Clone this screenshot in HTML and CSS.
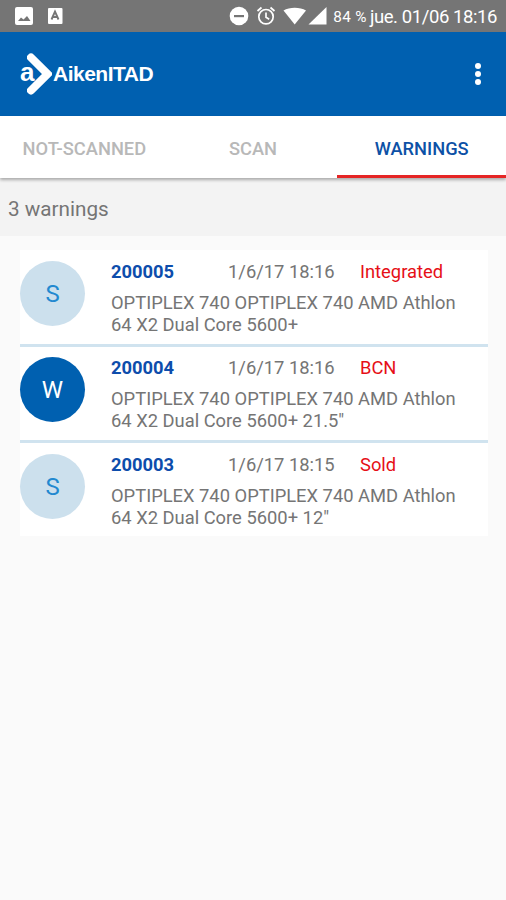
FILE: index.html
```html
<!DOCTYPE html>
<html lang="en">
<head>
  <meta charset="UTF-8">
  <meta name="viewport" content="width=device-width, initial-scale=1.0">
  <title>AikenITAD</title>
  <link rel="stylesheet" href="styles.css">
</head>
<body>
  <div class="status-bar">
    <svg class="status-left" width="50" height="18" viewBox="0 0 50 18">
      <rect x="0" y="0" width="18" height="18" rx="2" fill="#fff"/>
      <path d="M3 14l3-3.500 2.500 2 3.500-3.500 3.500 5z" fill="#757575"/>
      <rect x="33" y="1" width="14.500" height="16" rx="1" fill="#fff"/>
      <path d="M36.500 12.500l3.500-8 3.500 8M38 10h4" fill="none" stroke="#757575" stroke-width="1.900"/>
    </svg>
    <div class="status-right">
      <svg width="100" height="20" viewBox="0 0 100 20">
        <circle cx="10" cy="10" r="9.300" fill="#fff"/>
        <rect x="5" y="9" width="10" height="2.200" fill="#757575"/>
        <g fill="none" stroke="#fff" stroke-width="1.700">
          <circle cx="37" cy="10.700" r="7.200"/>
          <path d="M37 6.500v4.700l3.200 2M28.500 5l4-3.500M45.500 5l-4-3.500"/>
        </g>
        <path d="M54.500 4.500C60.500 .8 71 .8 77 4.500L65.700 18.500z" fill="#fff"/>
        <path d="M97.500 1v17.500H79.500z" fill="#fff"/>
      </svg>
      <span class="battery">84 %</span>
      <span class="clock">jue. 01/06 18:16</span>
    </div>
  </div>

  <header class="app-bar">
    <div class="logo">
      <span class="logo-a">a</span>
      <svg class="logo-arrow" width="25" height="42" viewBox="0 0 25 42">
        <path d="M4 4.500l16.500 16.500L4 37.500" fill="none" stroke="#fff" stroke-width="8" stroke-linecap="round"/>
      </svg>
      <span class="logo-name">AikenITAD</span>
    </div>
    <svg class="menu" width="8" height="24" viewBox="0 0 8 24" fill="#fff">
      <circle cx="4" cy="4" r="3"/>
      <circle cx="4" cy="12" r="3"/>
      <circle cx="4" cy="20" r="3"/>
    </svg>
  </header>

  <nav class="tabs">
    <div class="tab">NOT-SCANNED</div>
    <div class="tab">SCAN</div>
    <div class="tab active">WARNINGS</div>
  </nav>

  <div class="summary">3 warnings</div>

  <div class="list">
    <div class="item">
      <div class="avatar">S</div>
      <div class="info">
        <div class="top">
          <span class="code">200005</span>
          <span class="date">1/6/17 18:16</span>
          <span class="state">Integrated</span>
        </div>
        <div class="desc">OPTIPLEX 740 OPTIPLEX 740 AMD Athlon<br>64 X2 Dual Core 5600+</div>
      </div>
    </div>
    <div class="item">
      <div class="avatar dark">W</div>
      <div class="info">
        <div class="top">
          <span class="code">200004</span>
          <span class="date">1/6/17 18:16</span>
          <span class="state">BCN</span>
        </div>
        <div class="desc">OPTIPLEX 740 OPTIPLEX 740 AMD Athlon<br>64 X2 Dual Core 5600+ 21.5"</div>
      </div>
    </div>
    <div class="item">
      <div class="avatar">S</div>
      <div class="info">
        <div class="top">
          <span class="code">200003</span>
          <span class="date">1/6/17 18:15</span>
          <span class="state">Sold</span>
        </div>
        <div class="desc">OPTIPLEX 740 OPTIPLEX 740 AMD Athlon<br>64 X2 Dual Core 5600+ 12"</div>
      </div>
    </div>
  </div>
</body>
</html>
```
FILE: styles.css
```css
* {
  box-sizing: border-box;
}

body {
  margin: 0;
  min-height: 100vh;
  font-family: Roboto, sans-serif;
  background: #fafafa;
  color: #757575;
}

.status-bar {
  display: flex;
  justify-content: space-between;
  align-items: center;
  height: 32px;
  padding: 0 9px 0 15px;
  background: #757575;
  color: #fff;
}

.status-right {
  display: flex;
  align-items: center;
  white-space: nowrap;
}

.battery {
  margin-left: 4px;
  padding-top: 1px;
  font-size: 15.3px;
  letter-spacing: 0.4px;
}

.clock {
  margin-left: 3px;
  padding-top: 1px;
  font-size: 18.5px;
  letter-spacing: -0.42px;
}

.app-bar {
  display: flex;
  justify-content: space-between;
  align-items: center;
  height: 84px;
  padding: 0 24px 0 20px;
  background: #0060b0;
  color: #fff;
}

.logo {
  display: flex;
  align-items: center;
  font-family: "Liberation Sans", Arial, sans-serif;
  font-weight: bold;
}

.logo-a {
  width: 14px;
  font-size: 26px;
  line-height: 36px;
  padding-bottom: 4px;
}

.logo-arrow {
  margin-left: -7px;
}

.logo-name {
  margin-left: 1px;
  padding-bottom: 1px;
  font-size: 21px;
  letter-spacing: -0.5px;
}

.tabs {
  display: flex;
  position: relative;
  height: 62px;
  background: #fff;
  box-shadow: 0 2px 3px rgba(0, 0, 0, 0.3);
}

.tab {
  flex: 1;
  padding-top: 1px;
  font-size: 18.3px;
  font-weight: 500;
  line-height: 63px;
  text-align: center;
  color: #b8b8b8;
}

.tab.active {
  color: #0d51a6;
  border-bottom: 3px solid #e52525;
}

.summary {
  height: 58px;
  padding-left: 8px;
  font-size: 20.7px;
  line-height: 62px;
  background: #f3f3f3;
}

.list {
  margin: 14px 18px 0 20px;
  background: #fff;
}

.item {
  display: flex;
  height: 96.5px;
  padding-top: 10.5px;
  border-bottom: 3px solid #d0e3ef;
}

.item:last-child {
  height: 93px;
  border-bottom: none;
}

.avatar {
  width: 65px;
  height: 65px;
  border-radius: 50%;
  background: #cce0ed;
  color: #2389d0;
  font-size: 24px;
  line-height: 66px;
  text-align: center;
}

.avatar.dark {
  background: #0060b0;
  color: #fff;
}

.info {
  margin-left: 26px;
  font-size: 18.35px;
  line-height: 22px;
  white-space: nowrap;
}

.top {
  display: grid;
  grid-template-columns: 117px 132px auto;
  margin-bottom: 9px;
}

.code {
  font-weight: bold;
  color: #0d4dac;
}

.state {
  color: #e60f17;
}
```
